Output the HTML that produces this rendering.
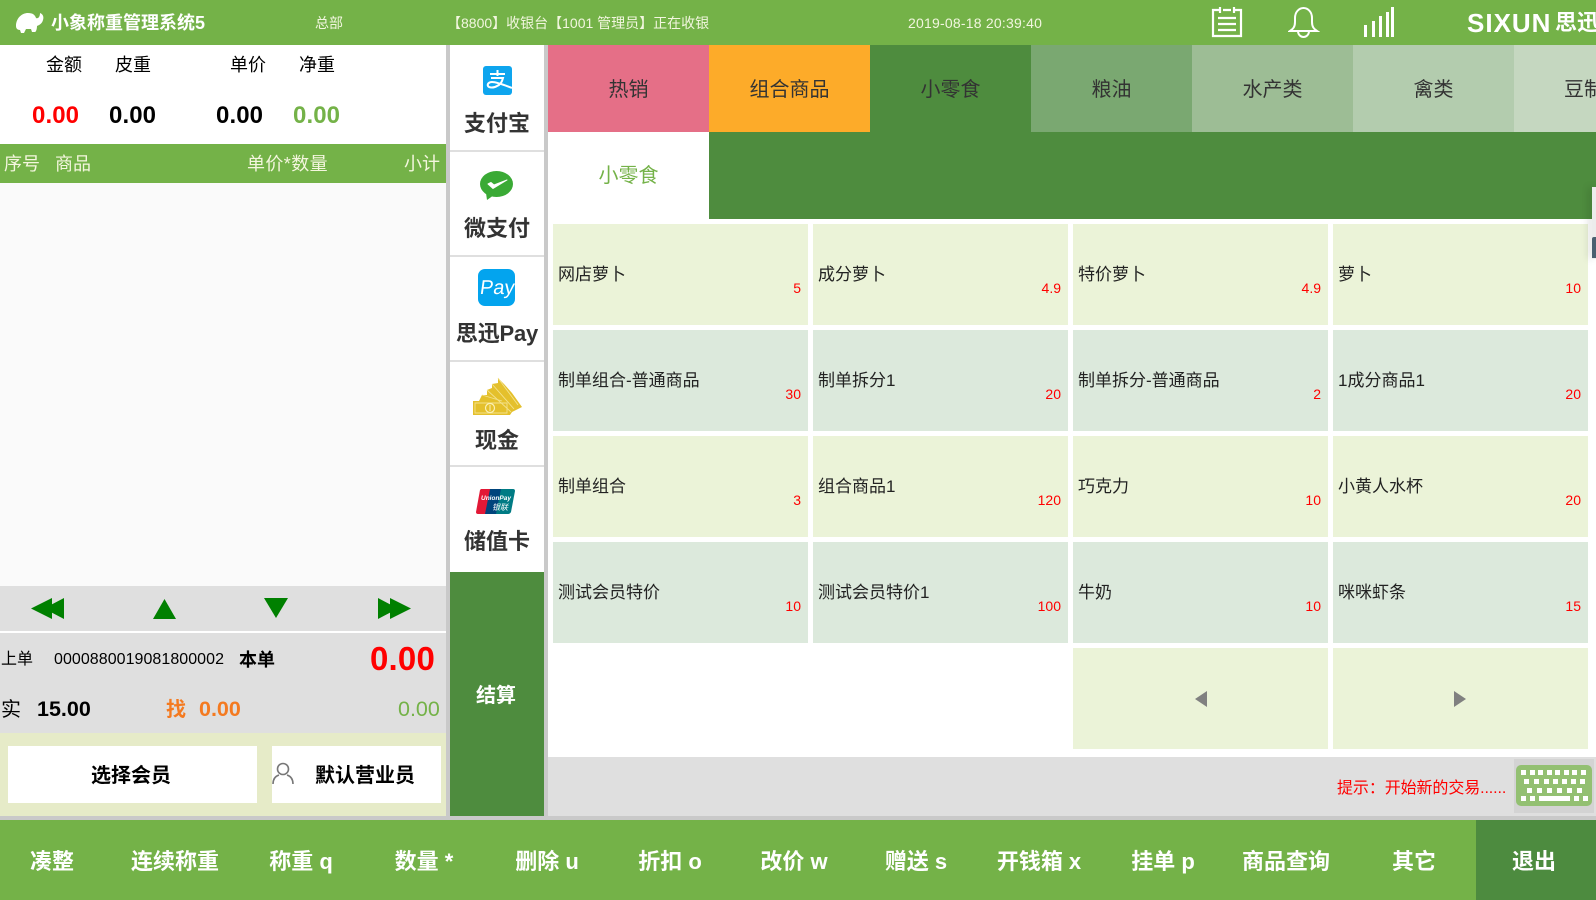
<!DOCTYPE html>
<html lang="zh"><head><meta charset="utf-8"><title>小象称重管理系统5</title>
<style>
html,body{margin:0;padding:0;width:1596px;height:900px;overflow:hidden;background:#fff}
body{position:relative;font-family:"Liberation Sans","Noto Sans CJK SC",sans-serif;color:#000}
div,span.a,svg.a{position:absolute}
.t{position:absolute;white-space:nowrap;line-height:30px;height:30px}
.b{font-weight:bold}
.tab{top:45px;width:161px;height:87px;line-height:91px;text-align:center;font-size:20px;color:#333;overflow:hidden;white-space:nowrap}
.card{width:255px;height:101px;background:#ebf3d8}
.alt{background:#dce9dc}
.card .n{position:absolute;left:5px;top:36px;font-size:17px;line-height:30px;color:#222;white-space:nowrap}
.card .p{position:absolute;right:7px;top:54px;font-size:14px;line-height:20px;color:#f00}
.pl{left:450px;width:94px;text-align:center;font-size:22px;font-weight:bold;color:#333;line-height:30px;height:30px;white-space:nowrap}
.bt{position:absolute;top:847px;font-size:22px;font-weight:bold;color:#fff;line-height:30px;white-space:nowrap;transform:translateX(-50%)}
</style></head><body>

<!-- header -->
<div style="left:0;top:0;width:1596px;height:45px;background:#74b248"></div>
<svg class="a" style="left:15px;top:12px" width="29" height="22" viewBox="0 0 29 22"><path d="M1 14C1 6 7 1 13 1c5 0 7 2 8 5 2 1 4-1 4-5 3 1 4 4 3 7-1 4-4 5-6 6 0 3-1 6-2 6h-3l-1-3h-5l-2 4H6l-1-3c-3 0-4-2-4-4z" fill="#fff"/></svg>
<span class="t b" style="left:51px;top:8px;font-size:18px;color:#fff">小象称重管理系统5</span>
<span class="t" style="left:315px;top:8px;font-size:14px;color:#f2f6df">总部</span>
<span class="t" style="left:447px;top:8px;font-size:14px;color:#f2f6df">【8800】收银台【1001 管理员】正在收银</span>
<span class="t" style="left:908px;top:8px;font-size:14px;color:#f2f6df;letter-spacing:.22px">2019-08-18 20:39:40</span>
<svg class="a" style="left:1211px;top:6px" width="32" height="32" viewBox="0 0 32 32" fill="none" stroke="#fff" stroke-width="2.200"><path d="M9 4H2v26h28V4h-7M12 4h8M9 1v6M23 1v6M7 12h18M7 18h18M7 24h18"/></svg>
<svg class="a" style="left:1288px;top:6px" width="32" height="32" viewBox="0 0 32 32" fill="none" stroke="#fff" stroke-width="2"><path d="M2 25c3-2 5-4 5-9V12C7 6 11 2 15.500 2S24 6 24 12v4c0 5 2 7 5 9H2zM10 25c0 4 3 6 5.500 6s5.500-2 5.500-6"/></svg>
<svg class="a" style="left:1364px;top:7px" width="31" height="30" viewBox="0 0 31 30" fill="#fff"><rect y="18" width="3" height="12"/><rect x="8" y="14" width="3" height="16"/><rect x="15" y="9" width="3" height="21"/><rect x="22" y="5" width="3" height="25"/><rect x="27" y="0" width="3" height="30"/></svg>
<span class="t" style="left:1467px;top:8px;font-size:26px;font-weight:bold;color:#fff;letter-spacing:1px">SIXUN</span>
<span class="t b" style="left:1555px;top:8px;font-size:22px;color:#fff">思迅</span>

<!-- left panel top -->
<div style="left:0;top:45px;width:446px;height:99px;background:#fff"></div>
<span class="t" style="left:46px;top:50px;font-size:18px">金额</span>
<span class="t" style="left:115px;top:50px;font-size:18px">皮重</span>
<span class="t" style="left:230px;top:50px;font-size:18px">单价</span>
<span class="t" style="left:299px;top:50px;font-size:18px">净重</span>
<span class="t b" style="left:32px;top:101px;font-size:24px;color:#f00;letter-spacing:.1px">0.00</span>
<span class="t b" style="left:109px;top:101px;font-size:24px;letter-spacing:.1px">0.00</span>
<span class="t b" style="left:216px;top:101px;font-size:24px;letter-spacing:.1px">0.00</span>
<span class="t b" style="left:293px;top:101px;font-size:24px;color:#74b248;letter-spacing:.1px">0.00</span>

<div style="left:0;top:144px;width:446px;height:39px;background:#74b248"></div>
<span class="t" style="left:4px;top:149px;font-size:18px;color:#f4f6de">序号</span>
<span class="t" style="left:55px;top:149px;font-size:18px;color:#f4f6de">商品</span>
<span class="t" style="left:247px;top:149px;font-size:18px;color:#f4f6de;letter-spacing:.4px">单价*数量</span>
<span class="t" style="left:404px;top:149px;font-size:18px;color:#f4f6de">小计</span>
<div style="left:0;top:183px;width:446px;height:403px;background:#fafafa"></div>

<!-- nav -->
<div style="left:0;top:586px;width:446px;height:45px;background:#dfdfdf"></div>
<div style="left:0;top:631px;width:446px;height:2px;background:#fff"></div>
<svg class="a" style="left:0;top:586px" width="446" height="45" fill="#008000"><path d="M31 22.500 52 12v21z"/><path d="M44 22.500 64 12v21z"/><path d="M153 33l11.500-20 11.500 20z"/><path d="M264 12h24l-12 20z"/><path d="M411 22.500 390 12v21z"/><path d="M398 22.500 378 12v21z"/></svg>

<!-- totals -->
<div style="left:0;top:633px;width:446px;height:100px;background:#dfdfdf"></div>
<span class="t" style="left:1px;top:645px;font-size:16px">上单</span>
<span class="t" style="left:54px;top:645px;font-size:16px;letter-spacing:.05px">0000880019081800002</span>
<span class="t b" style="left:239px;top:645px;font-size:18px">本单</span>
<span class="t b" style="left:370px;top:644px;font-size:33px;color:#f00;letter-spacing:.2px">0.00</span>
<span class="t" style="left:1px;top:695px;font-size:20px">实</span>
<span class="t b" style="left:37px;top:694px;font-size:21.500px">15.00</span>
<span class="t b" style="left:166px;top:695px;font-size:20px;color:#f47a20">找</span>
<span class="t b" style="left:199px;top:694px;font-size:21.500px;color:#f47a20">0.00</span>
<span class="t" style="left:398px;top:694px;font-size:21.500px;color:#74b248">0.00</span>

<div style="left:0;top:733px;width:446px;height:83px;background:#e6ebc8"></div>
<div style="left:8px;top:746px;width:249px;height:57px;background:#fff"></div>
<div style="left:272px;top:746px;width:169px;height:57px;background:#fff"></div>
<span class="t b" style="left:91px;top:761px;font-size:20px">选择会员</span>
<svg class="a" style="left:272px;top:762px" width="22" height="24" viewBox="0 0 22 24" fill="none" stroke="#777" stroke-width="1.600"><circle cx="11" cy="7" r="5.500"/><path d="M1 22c0-6 3-8 6-9M21 22c0-6-3-8-6-9"/></svg>
<span class="t b" style="left:315px;top:761px;font-size:20px">默认营业员</span>

<!-- pay column -->
<div style="left:446px;top:45px;width:4px;height:771px;background:#c9c9c9"></div>
<div style="left:544px;top:45px;width:4px;height:771px;background:#c9c9c9"></div>
<div style="left:450px;top:46px;width:94px;height:104px;background:#fff"></div>
<div style="left:450px;top:150px;width:94px;height:2px;background:#dfdfdf"></div>
<div style="left:450px;top:152px;width:94px;height:103px;background:#fff"></div>
<div style="left:450px;top:255px;width:94px;height:2px;background:#dfdfdf"></div>
<div style="left:450px;top:257px;width:94px;height:103px;background:#fff"></div>
<div style="left:450px;top:360px;width:94px;height:2px;background:#dfdfdf"></div>
<div style="left:450px;top:362px;width:94px;height:103px;background:#fff"></div>
<div style="left:450px;top:465px;width:94px;height:2px;background:#dfdfdf"></div>
<div style="left:450px;top:467px;width:94px;height:105px;background:#fff"></div>
<div style="left:450px;top:572px;width:94px;height:244px;background:#4e8c3e"></div>

<svg class="a" style="left:483px;top:66px" width="29" height="29" viewBox="0 0 29 29"><rect width="29" height="29" rx="3" fill="#0ea5ee"/><path d="M14.500 4v6M7 8h15M8 12h12c-1 4-3 7-6 8-3 2-8 2-9 0s1-4 4-4c5 0 12 3 20 6" fill="none" stroke="#fff" stroke-width="2"/></svg>
<span class="pl a" style="top:109px">支付宝</span>

<svg class="a" style="left:480px;top:171px" width="33" height="30" viewBox="0 0 33 30"><ellipse cx="16.500" cy="13" rx="16.500" ry="13" fill="#3aaa35"/><path d="M6 22l1 7 7-5z" fill="#3aaa35"/><path d="M8 13l5 4.500L27 9l-13 5-3-2.500z" fill="#fff" stroke="#fff" stroke-width="1" stroke-linejoin="round"/></svg>
<span class="pl a" style="top:214px">微支付</span>

<svg class="a" style="left:478px;top:269px" width="37" height="37" viewBox="0 0 37 37"><rect width="37" height="37" rx="7" fill="#03a4ee"/><text x="0" y="0" text-anchor="middle" transform="translate(18.500 25) skewX(-8)" font-family="Liberation Sans" font-size="20" fill="#fff">Pay</text></svg>
<span class="pl a" style="top:319px;letter-spacing:-.2px">思迅Pay</span>

<svg class="a" style="left:474px;top:378px;overflow:visible" width="50" height="38" viewBox="0 0 50 38"><path d="M-1 23 5 23 8 17 13 17 13 12 18 10 18 6 24 5 24 0 30 6 38 15 48 29 38 34 36 37H-1z" fill="#e4c02c"/><path d="M24 0l20 27M18 6l22 25M13 12l24 22M8 17l20 6M1 25h32v10H1z" fill="none" stroke="#f3e28d" stroke-width=".9"/><circle cx="16" cy="30" r="4.500" fill="none" stroke="#fbf0b5" stroke-width="1.200"/><path d="M16 27v6" stroke="#fbf0b5"/></svg>
<span class="pl a" style="top:426px">现金</span>

<svg class="a" style="left:476px;top:488px" width="39" height="27" viewBox="0 0 39 27"><path d="M5 1h14l-5 25H2Q0 26 0 24L4 2z" fill="#e21836"/><path d="M14 1h14l-5 25H9z" fill="#00447c"/><path d="M25 1h12q2 0 2 2l-4 21q-1 2-3 2H20z" fill="#007b84"/><text x="20" y="12" text-anchor="middle" font-family="Liberation Sans" font-size="6.500" font-weight="bold" font-style="italic" fill="#fff">UnionPay</text><text x="24" y="22" text-anchor="middle" font-family="Noto Sans CJK SC" font-size="8" font-style="italic" fill="#fff">银联</text></svg>
<span class="pl a" style="top:527px">储值卡</span>
<span class="t b" style="left:476px;top:681px;font-size:20px;color:#fff">结算</span>

<!-- tabs -->
<div class="tab" style="left:548px;background:#e56f87">热销</div>
<div class="tab" style="left:709px;background:#fdab29">组合商品</div>
<div class="tab" style="left:870px;background:#4e8c3e">小零食</div>
<div class="tab" style="left:1031px;background:#7aa871">粮油</div>
<div class="tab" style="left:1192px;background:#9dbd95">水产类</div>
<div class="tab" style="left:1353px;background:#b3ccae">禽类</div>
<div class="tab" style="left:1514px;width:82px;background:#c5d7c0"><span class="t" style="left:50px;top:30px">豆制品</span></div>
<div class="tab" style="left:548px;top:132px;height:87px;line-height:89px;background:#fff;color:#74b248">小零食</div>
<div style="left:709px;top:132px;width:887px;height:87px;background:#4e8c3e"></div>

<!-- cards -->
<div class="card" style="left:553px;top:224px"><span class="n">网店萝卜</span><span class="p">5</span></div>
<div class="card" style="left:813px;top:224px"><span class="n">成分萝卜</span><span class="p">4.9</span></div>
<div class="card" style="left:1073px;top:224px"><span class="n">特价萝卜</span><span class="p">4.9</span></div>
<div class="card" style="left:1333px;top:224px"><span class="n">萝卜</span><span class="p">10</span></div>
<div class="card alt" style="left:553px;top:330px"><span class="n">制单组合-普通商品</span><span class="p">30</span></div>
<div class="card alt" style="left:813px;top:330px"><span class="n">制单拆分1</span><span class="p">20</span></div>
<div class="card alt" style="left:1073px;top:330px"><span class="n">制单拆分-普通商品</span><span class="p">2</span></div>
<div class="card alt" style="left:1333px;top:330px"><span class="n">1成分商品1</span><span class="p">20</span></div>
<div class="card" style="left:553px;top:436px"><span class="n">制单组合</span><span class="p">3</span></div>
<div class="card" style="left:813px;top:436px"><span class="n">组合商品1</span><span class="p">120</span></div>
<div class="card" style="left:1073px;top:436px"><span class="n">巧克力</span><span class="p">10</span></div>
<div class="card" style="left:1333px;top:436px"><span class="n">小黄人水杯</span><span class="p">20</span></div>
<div class="card alt" style="left:553px;top:542px"><span class="n">测试会员特价</span><span class="p">10</span></div>
<div class="card alt" style="left:813px;top:542px"><span class="n">测试会员特价1</span><span class="p">100</span></div>
<div class="card alt" style="left:1073px;top:542px"><span class="n">牛奶</span><span class="p">10</span></div>
<div class="card alt" style="left:1333px;top:542px"><span class="n">咪咪虾条</span><span class="p">15</span></div>
<div class="card" style="left:1073px;top:648px"><svg class="a" style="left:122px;top:43px" width="14" height="16"><path d="M12 0v16L0 8z" fill="#808080"/></svg></div>
<div class="card" style="left:1333px;top:648px"><svg class="a" style="left:120px;top:43px" width="14" height="16"><path d="M1 0v16l12-8z" fill="#808080"/></svg></div>

<!-- right edge widget -->
<div style="left:1592px;top:187px;width:4px;height:72px;background:#ececec;box-shadow:-3px 0 8px rgba(0,0,0,.18)"></div>
<div style="left:1592px;top:237px;width:4px;height:21px;background:#4a6070;border-radius:2px 0 0 0"></div>

<!-- hint bar -->
<div style="left:548px;top:757px;width:1048px;height:59px;background:#dfdfdf"></div>
<span class="t" style="left:1337px;top:771px;font-size:16px;color:#f00;letter-spacing:-.1px">提示<span style="font-family:'Noto Sans CJK TC',sans-serif">：</span>开始新的交易......</span>
<div style="left:1514px;top:759px;width:80px;height:54px;background:#d3d3d3"></div>
<svg class="a" style="left:1516px;top:765px" width="76" height="41" viewBox="0 0 76 41"><rect width="76" height="41" rx="5" fill="#93c072"/><g fill="#fff"><path d="M5 5h5v5H5zM14 5h5v5h-5zM22 5h5v5h-5zM31 5h5v5h-5zM39 5h5v5h-5zM48 5h5v5h-5zM56 5h5v5h-5zM65 5h5v5h-5z"/><path d="M8 14h5v5H8zM18 14h5v5h-5zM28 14h5v5h-5zM37 14h5v5h-5zM46 14h5v5h-5zM55 14h5v5h-5zM64 14h5v5h-5z"/><path d="M11 23h5v5h-5zM21 23h5v5h-5zM31 23h5v5h-5zM41 23h5v5h-5zM51 23h5v5h-5zM61 23h5v5h-5z"/><path d="M5 31h5v5H5zM14 31h5v5h-5zM23 31h31v5H23zM58 31h5v5h-5zM67 31h5v5h-5z"/></g></svg>

<!-- bottom bar -->
<div style="left:0;top:816px;width:1596px;height:4px;background:#c9c9c9"></div>
<div style="left:0;top:820px;width:1476px;height:80px;background:#74b248"></div>
<div style="left:1476px;top:820px;width:120px;height:80px;background:#4d8b3f"></div>
<span class="bt" style="left:52px">凑整</span>
<span class="bt" style="left:175px">连续称重</span>
<span class="bt" style="left:301px">称重 q</span>
<span class="bt" style="left:424px">数量 *</span>
<span class="bt" style="left:547px">删除 u</span>
<span class="bt" style="left:670px">折扣 o</span>
<span class="bt" style="left:794px">改价 w</span>
<span class="bt" style="left:916px">赠送 s</span>
<span class="bt" style="left:1039px">开钱箱 x</span>
<span class="bt" style="left:1163px">挂单 p</span>
<span class="bt" style="left:1286px">商品查询</span>
<span class="bt" style="left:1414px">其它</span>
<span class="bt" style="left:1534px">退出</span>
</body></html>
